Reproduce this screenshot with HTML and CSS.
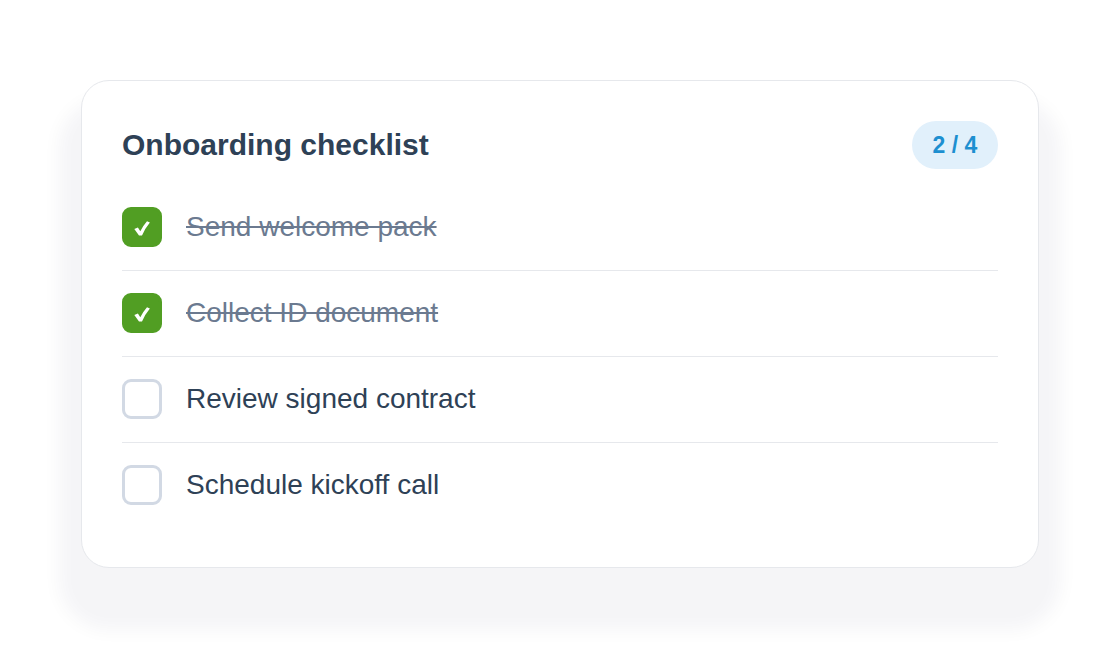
FILE: index.html
```html
<!DOCTYPE html>
<html>
<head>
<meta charset="utf-8">
<link rel="stylesheet" href="styles.css">
</head>
<body>
<main class="stage">
  <section class="card">
    <header class="card-head">
      <h1 class="title">Onboarding checklist</h1>
      <span class="badge">2 / 4</span>
    </header>
    <ul class="list">
      <li class="item done"><span class="box"><svg class="tick" viewBox="0 0 16 15" width="16" height="15"><path d="M0.3 8 L3.9 6.5 L6.3 10.3 Q9.4 4.2 13 0.2 L15.9 1.4 Q11.2 6.9 8 14.6 L5 14.6 Z" fill="#fff"/></svg></span><span class="label">Send welcome pack</span></li>
      <li class="item done"><span class="box"><svg class="tick" viewBox="0 0 16 15" width="16" height="15"><path d="M0.3 8 L3.9 6.5 L6.3 10.3 Q9.4 4.2 13 0.2 L15.9 1.4 Q11.2 6.9 8 14.6 L5 14.6 Z" fill="#fff"/></svg></span><span class="label">Collect ID document</span></li>
      <li class="item"><span class="box"></span><span class="label">Review signed contract</span></li>
      <li class="item"><span class="box"></span><span class="label">Schedule kickoff call</span></li>
    </ul>
  </section>
</main>
</body>
</html>
```
FILE: styles.css
```css
* { box-sizing: border-box; }
html, body { margin: 0; padding: 0; background: #fff; }
body { font-family: "Liberation Sans", Arial, sans-serif; }
.stage { padding: 80px 0 82px 81px; min-height: 650px; }
.card {
  width: 958px;
  height: 488px;
  background: #fff;
  border: 1px solid #e6e8ec;
  border-radius: 28px;
  padding: 40px 40px 40px 40px;
  box-shadow: 0 40px 18px 22px rgba(20, 30, 60, 0.045);
}
.card-head {
  display: flex;
  align-items: center;
  justify-content: space-between;
  height: 48px;
  margin-bottom: 16px;
}
.title {
  margin: 0;
  font-size: 30px;
  font-weight: 700;
  color: #2e4156;
}
.badge {
  display: inline-flex;
  align-items: center;
  justify-content: center;
  width: 86px;
  height: 48px;
  border-radius: 24px;
  background: #e1f0fb;
  color: #1d8fd0;
  font-size: 23px;
  font-weight: 700;
}
.list { list-style: none; margin: 0; padding: 0; }
.item {
  display: flex;
  align-items: center;
  gap: 24px;
  padding: 22px 0 23px;
  border-bottom: 1px solid #e6e8ec;
}
.item:last-child { border-bottom: none; padding-bottom: 22px; }
.box {
  width: 40px;
  height: 40px;
  flex: none;
  border: 3px solid #d2d9e4;
  border-radius: 9px;
  display: flex;
  align-items: center;
  justify-content: center;
}
.tick { display: block; margin-top: 3px; }
.done .box { background: #519e23; border-color: #519e23; }
.label { font-size: 28px; color: #2e4156; }
.done .label { color: #6b7a90; text-decoration: line-through; }
```
